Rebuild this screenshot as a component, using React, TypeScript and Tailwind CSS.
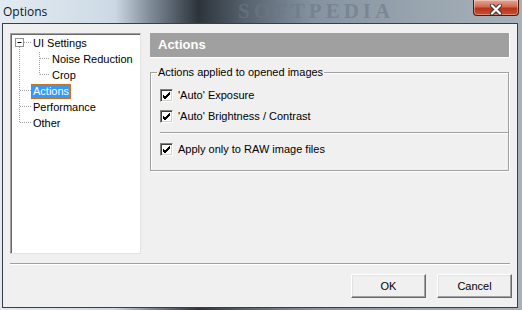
import type { ReactNode } from 'react';

const ui = { fontFamily: '"Liberation Sans", Arial, sans-serif' };

function CheckBox() {
  return (
    <span className="flex h-[13px] w-[13px] shrink-0 items-center justify-center border border-t-[#808080] border-l-[#808080] border-b-white border-r-white bg-white shadow-[inset_1px_1px_0_#404040,inset_-1px_-1px_0_#d4d0c8]">
      <svg width="9" height="9" viewBox="0 0 9 9">
        <path d="M1 4 L3 6 L8 1 M1 5 L3 7 L8 2 M1 6 L3 8 L8 3" stroke="#000" strokeWidth="1" fill="none" />
      </svg>
    </span>
  );
}

function CheckRow({ children }: { children: ReactNode }) {
  return (
    <div className="flex h-[21px] items-center gap-[5px] pl-[9px]">
      <CheckBox />
      <span className="text-[11px] text-black">{children}</span>
    </div>
  );
}

function TreeRow({ label, indent, selected }: { label: string; indent: number; selected?: boolean }) {
  return (
    <div className="flex h-[16px] items-center">
      <span
        className={
          indent === 0
            ? selected
              ? 'ml-[19px] border border-dotted border-[#c8701c] bg-[#3399ff] px-[1px] leading-[13px] text-white'
              : 'ml-[19px] border border-transparent px-[1px] leading-[13px] text-black'
            : 'ml-[38px] border border-transparent px-[1px] leading-[13px] text-black'
        }
      >
        {label}
      </span>
    </div>
  );
}

function TreeLines() {
  return (
    <svg className="absolute left-0 top-0" width="60" height="100" viewBox="0 0 60 100">
      <g stroke="#a0a0a0" strokeWidth="1" strokeDasharray="1 1" fill="none">
        <path d="M7.5 12 V87.5" />
        <path d="M12 7.5 H19" />
        <path d="M8 55.5 H19 M8 71.5 H19 M8 87.5 H19" />
        <path d="M27.5 17 V39.5" />
        <path d="M28 23.5 H38 M28 39.5 H38" />
      </g>
      <rect x="3.5" y="3.5" width="8" height="8" fill="#fff" stroke="#919191" />
      <path d="M5.5 7.5 H9.5" stroke="#000" />
    </svg>
  );
}

function Button({ children }: { children: ReactNode }) {
  return (
    <button className="flex h-[24px] w-[75px] items-center justify-center border border-t-white border-l-white border-b-[#696969] border-r-[#696969] bg-[#f0f0f0] text-[11px] text-black shadow-[inset_-1px_-1px_0_#a0a0a0,inset_1px_1px_0_#e3e3e3]">
      {children}
    </button>
  );
}

export default function App() {
  return (
    <div
      className="relative h-[310px] w-[522px] overflow-hidden bg-[linear-gradient(90deg,#e3ebf2_0%,#ccd9e4_22%,#7d8a96_29%,#2c333b_38%,#56626e_47%,#8593a1_60%,#98a4ae_80%,#a7b1b9_100%)]"
      style={ui}
    >
      {/* title bar */}
      <div className="relative flex h-[23px] items-center justify-between">
        <span
          className="pointer-events-none absolute left-[238px] top-[1px] text-[21px] font-bold leading-[21px] tracking-[4px] text-[#6b7886]/60"
          style={{ fontFamily: '"Liberation Serif", serif' }}
        >
          SOFTPEDIA
        </span>
        <span className="relative ml-[3px] text-[12px] text-[#101820]" style={{ fontFamily: '"Open Sans", sans-serif' }}>
          Options
        </span>
        <div className="relative mr-[3px] mt-[-7px] flex h-[16px] w-[46px] items-center justify-center rounded-b-[4px] border border-t-0 border-[#4a1c12] bg-[linear-gradient(180deg,#e7a596_0%,#d06a52_45%,#b8331b_55%,#c8502e_100%)] shadow-[inset_0_0_0_1px_rgba(255,255,255,0.35)]">
          <svg width="14" height="11" viewBox="0 0 14 11" className="mt-[3px]">
            <path d="M3 1.5 L11 9.5 M11 1.5 L3 9.5" stroke="#3a3a3a" strokeWidth="4" strokeLinecap="round" />
            <path d="M3 1.5 L11 9.5 M11 1.5 L3 9.5" stroke="#fff" strokeWidth="2.2" strokeLinecap="round" />
          </svg>
        </div>
      </div>

      {/* client area */}
      <div className="ml-[2px] flex h-[285px] w-[516px] flex-col border border-[#3a3f45] bg-[#f0f0f0]">
        <div className="flex gap-[9px] pl-[7px] pt-[9px]">
          {/* tree */}
          <div className="relative h-[221px] w-[131px] border border-t-[#a0a0a0] border-l-[#a0a0a0] border-b-[#e3e3e3] border-r-[#e3e3e3] bg-white text-[11px] shadow-[inset_1px_1px_0_#696969]">
            <div className="relative ml-[1px] mt-[1px]">
              <TreeLines />
              <TreeRow label="UI Settings" indent={0} />
              <TreeRow label="Noise Reduction" indent={1} />
              <TreeRow label="Crop" indent={1} />
              <TreeRow label="Actions" indent={0} selected />
              <TreeRow label="Performance" indent={0} />
              <TreeRow label="Other" indent={0} />
            </div>
          </div>

          {/* right panel */}
          <div className="flex w-[360px] flex-col">
            <div className="flex h-[25px] items-center border-b border-r border-white bg-[#a0a0a0] pl-[8px] text-[13px] font-bold text-white">
              Actions
            </div>
            <fieldset className="mt-[8px] w-[359px] border border-[#a0a0a0] pb-[10px] shadow-[inset_1px_1px_0_#fff,1px_1px_0_#fff]">
              <legend className="ml-[6px] px-[1px] text-[11px] leading-[13px] text-black">
                Actions applied to opened images
              </legend>
              <div className="mt-[6px]">
                <CheckRow>'Auto' Exposure</CheckRow>
                <CheckRow>'Auto' Brightness / Contrast</CheckRow>
                <div className="my-[5px] ml-[9px] h-[2px] border-t border-[#a0a0a0] border-b border-b-white" />
                <CheckRow>Apply only to RAW image files</CheckRow>
              </div>
            </fieldset>
          </div>
        </div>

        {/* separator */}
        <div className="ml-[7px] mt-[9px] h-[2px] w-[500px] border-t border-[#a0a0a0] border-b border-b-white" />

        {/* buttons */}
        <div className="mt-[9px] flex justify-end gap-[11px] pr-[5px]">
          <Button>OK</Button>
          <Button>Cancel</Button>
        </div>
      </div>
    </div>
  );
}
